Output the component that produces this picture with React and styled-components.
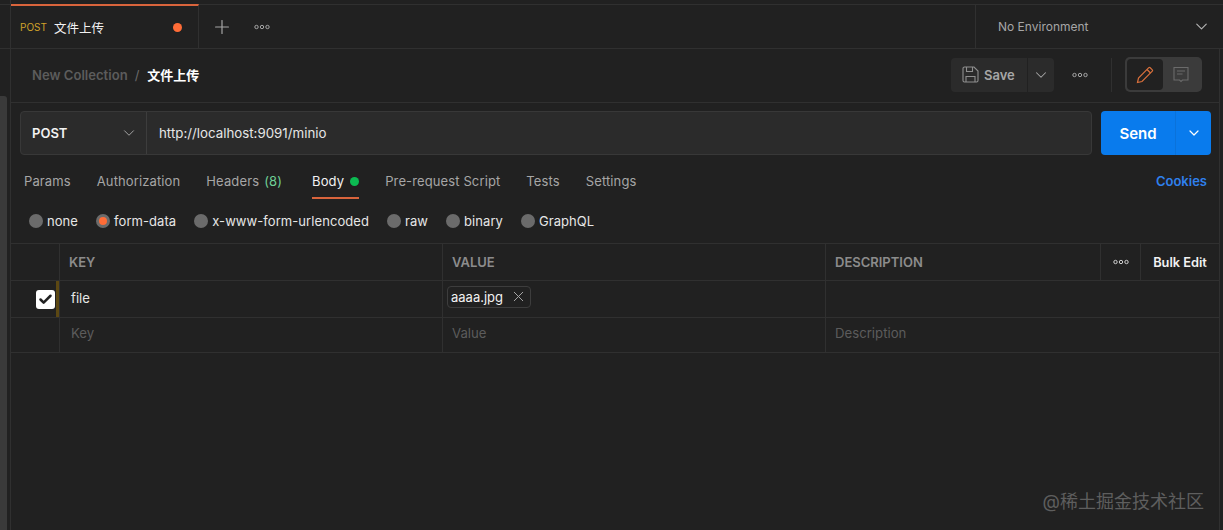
import React from "react";
import styled, { createGlobalStyle } from "styled-components";
import { ChevronDown, Plus, X, Check } from "lucide-react";

const Global = createGlobalStyle`
  html, body { margin: 0; padding: 0; background: #212121; }
  * { box-sizing: border-box; }
  body { font-family: Inter, "Noto Sans CJK SC", sans-serif; }
`;

const line = "#303030";

const Dots = ({ color = "#a6a6a6" }) => (
  <svg width="16" height="6" viewBox="0 0 16 6" fill="none" stroke={color} strokeWidth="1">
    <circle cx="2.5" cy="3" r="1.7" />
    <circle cx="8" cy="3" r="1.7" />
    <circle cx="13.5" cy="3" r="1.7" />
  </svg>
);

const SaveIcon = () => (
  <svg width="17" height="17" viewBox="0 0 17 17" fill="none" stroke="#8f8f8f" strokeWidth="1.1">
    <path d="M1 2.5A1.5 1.5 0 0 1 2.5 1H12l4 4v9.5a1.5 1.5 0 0 1-1.5 1.5h-12A1.5 1.5 0 0 1 1 14.5z" />
    <path d="M4.5 1v4.5h6V1M4 16v-5.5h9V16" />
  </svg>
);

const PencilIcon = () => (
  <svg width="18" height="18" viewBox="0 0 18 18" fill="none" stroke="#d9703c" strokeWidth="1.2">
    <path d="M1.5 16.5l1-4.5L12.8 1.7a1 1 0 0 1 1.4 0l2.1 2.1a1 1 0 0 1 0 1.4L6 15.5z" />
    <path d="M11 3.5l3.5 3.5" />
  </svg>
);

const CommentIcon = () => (
  <svg width="16" height="17" viewBox="0 0 16 17" fill="none" stroke="#6b6b6b" strokeWidth="1.1">
    <path d="M1 1.5h14v12.5H9.5L8 15.5 6.5 14H1z" />
    <path d="M4 5h8M4 8h5.5" />
  </svg>
);

const tabs = [
  { label: "Params" },
  { label: "Authorization" },
  { label: "Headers", count: "(8)" },
  { label: "Body", active: true, dot: true },
  { label: "Pre-request Script" },
  { label: "Tests" },
  { label: "Settings" },
];

const bodyTypes = ["none", "form-data", "x-www-form-urlencoded", "raw", "binary", "GraphQL"];

export default function App() {
  return (
    <Shell>
      <Global />
      <Rail>
        <RailHead />
        <Scroll />
      </Rail>
      <Main>
        <TabBar>
          <RequestTab>
            <Method>POST</Method>
            <TabTitle>文件上传</TabTitle>
            <Unsaved />
          </RequestTab>
          <TabAdd>
            <Plus size={22} strokeWidth={1.3} />
          </TabAdd>
          <Dots />
          <EnvPicker>
            <span>No Environment</span>
            <ChevronDown size={19} strokeWidth={1.4} color="#b5b5b5" />
          </EnvPicker>
        </TabBar>

        <Pane>
          <CrumbBar>
            <Crumb>New Collection</Crumb>
            <CrumbSlash>/</CrumbSlash>
            <CrumbCurrent>文件上传</CrumbCurrent>
            <SaveGroup>
              <SaveMain>
                <SaveIcon />
                Save
              </SaveMain>
              <SaveCaret>
                <ChevronDown size={18} strokeWidth={1.4} color="#a6a6a6" />
              </SaveCaret>
            </SaveGroup>
            <MoreSlot>
              <Dots />
            </MoreSlot>
            <ModeSwitch>
              <ModeButton $active>
                <PencilIcon />
              </ModeButton>
              <ModeButton>
                <CommentIcon />
              </ModeButton>
            </ModeSwitch>
          </CrumbBar>

          <UrlRow>
            <UrlBox>
              <MethodSelect>
                POST
                <ChevronDown size={18} strokeWidth={1.3} color="#a6a6a6" />
              </MethodSelect>
              <UrlText>http://localhost:9091/minio</UrlText>
            </UrlBox>
            <SendGroup>
              <SendMain>Send</SendMain>
              <SendCaret>
                <ChevronDown size={16} strokeWidth={1.8} color="#ffffff" />
              </SendCaret>
            </SendGroup>
          </UrlRow>

          <TabsRow>
            {tabs.map((t) => (
              <ReqTab key={t.label} $active={t.active}>
                {t.label}
                {t.count && <Count>{t.count}</Count>}
                {t.dot && <GreenDot />}
              </ReqTab>
            ))}
            <Cookies>Cookies</Cookies>
          </TabsRow>

          <RadioRow>
            {bodyTypes.map((b) => (
              <RadioItem key={b}>
                <Radio $on={b === "form-data"} />
                {b}
              </RadioItem>
            ))}
          </RadioRow>

          <Table>
            <HeadRow>
              <CheckCell />
              <HeadCell $w={383}>KEY</HeadCell>
              <HeadCell $w={383}>VALUE</HeadCell>
              <HeadCell $grow>DESCRIPTION</HeadCell>
              <IconCell>
                <Dots color="#d0d0d0" />
              </IconCell>
              <BulkCell>Bulk Edit</BulkCell>
            </HeadRow>
            <BodyRow $h={37}>
              <CheckCell>
                <Tick>
                  <Check size={15} strokeWidth={4} color="#212121" />
                </Tick>
                <Marker />
              </CheckCell>
              <KeyCell $w={383} $pad={11}>file</KeyCell>
              <ValueCell $w={383}>
                <FileChip>
                  aaaa.jpg
                  <X size={17} strokeWidth={1.4} color="#a6a6a6" />
                </FileChip>
              </ValueCell>
            </BodyRow>
            <BodyRow $h={35}>
              <CheckCell />
              <KeyCell $w={383} $pad={11} $ghost>Key</KeyCell>
              <KeyCell $w={383} $pad={9} $ghost>Value</KeyCell>
              <KeyCell $pad={9} $ghost $grow>Description</KeyCell>
            </BodyRow>
          </Table>
        </Pane>
        <Watermark>@稀土掘金技术社区</Watermark>
      </Main>
    </Shell>
  );
}

const Shell = styled.div`
  display: flex;
  width: 1223px;
  height: 530px;
  overflow: hidden;
  background: #212121;
`;
const Rail = styled.div`
  width: 11px;
  border-right: 1px solid ${line};
  flex: none;
`;
const RailHead = styled.div`
  height: 45px;
  margin: 4px 0 47px;
  border-top: 1px solid ${line};
  border-bottom: 1px solid ${line};
`;
const Scroll = styled.div`
  width: 7px;
  height: 434px;
  background: #3a3a3a;
  border-radius: 0 3px 0 0;
`;
const Main = styled.div`
  position: relative;
  width: 1212px;
  height: 526px;
  margin-top: 4px;
  border-top: 1px solid ${line};
  flex: none;
`;
const TabBar = styled.div`
  display: flex;
  align-items: center;
  height: 44px;
  border-bottom: 1px solid ${line};
`;
const RequestTab = styled.div`
  display: flex;
  align-items: center;
  width: 188px;
  height: 44px;
  margin-top: -1px;
  padding: 0 16px 0 9px;
  border-top: 2px solid #d9643c;
  border-right: 1px solid ${line};
  background: #212121;
`;
const Method = styled.span`
  font-size: 10px;
  color: #d0a12a;
  margin-right: 7px;
`;
const TabTitle = styled.span`
  font-size: 12.5px;
  color: #f2f2f2;
`;
const Unsaved = styled.span`
  width: 9px;
  height: 9px;
  margin-left: auto;
  border-radius: 50%;
  background: #ff6c37;
`;
const TabAdd = styled.div`
  display: flex;
  margin: 0 21px 0 12px;
  color: #a6a6a6;
`;
const EnvPicker = styled.div`
  display: flex;
  align-items: center;
  justify-content: space-between;
  width: 248px;
  height: 43px;
  margin-left: auto;
  padding: 0 12px 0 22px;
  border-left: 1px solid ${line};
  font-size: 12px;
  color: #a6a6a6;
`;
const Pane = styled.div`
  width: 1209px;
  height: 481px;
  border-right: 1px solid ${line};
`;
const CrumbBar = styled.div`
  display: flex;
  align-items: center;
  height: 54px;
  padding: 0 17px 2px 21px;
  border-bottom: 1px solid ${line};
`;
const Crumb = styled.span`
  font-size: 13.1px;
  font-weight: 600;
  color: #5c5c5c;
`;
const CrumbSlash = styled.span`
  margin: 0 8px 0 7px;
  font-size: 13px;
  color: #6b6b6b;
`;
const CrumbCurrent = styled.span`
  font-size: 13px;
  font-weight: 700;
  color: #ffffff;
`;
const SaveGroup = styled.div`
  display: flex;
  height: 34px;
  margin-left: auto;
  border-radius: 4px;
  background: #2b2b2b;
`;
const SaveMain = styled.div`
  display: flex;
  align-items: center;
  gap: 5px;
  width: 76px;
  padding-left: 11px;
  font-size: 13px;
  font-weight: 600;
  color: #a6a6a6;
`;
const SaveCaret = styled.div`
  display: flex;
  align-items: center;
  justify-content: center;
  width: 27px;
  border-left: 1px solid #212121;
`;
const MoreSlot = styled.div`
  display: flex;
  align-items: center;
  justify-content: center;
  width: 58px;
  height: 34px;
  padding-right: 6px;
  border-right: 1px solid ${line};
  margin-right: 13px;
`;
const ModeSwitch = styled.div`
  display: flex;
  width: 77px;
  height: 35px;
  padding: 2px;
  border-radius: 5px;
  background: #3b3b3b;
`;
const ModeButton = styled.div`
  display: flex;
  align-items: center;
  justify-content: center;
  width: 36px;
  border-radius: 4px;
  background: ${(p) => (p.$active ? "#212121" : "transparent")};
`;
const UrlRow = styled.div`
  display: flex;
  gap: 9px;
  padding: 8px 8px 0 9px;
`;
const UrlBox = styled.div`
  display: flex;
  flex: 1;
  height: 44px;
  border: 1px solid #383838;
  border-radius: 4px;
  background: #2b2b2b;
`;
const MethodSelect = styled.div`
  display: flex;
  align-items: center;
  justify-content: space-between;
  width: 126px;
  padding: 0 8px 0 11px;
  border-right: 1px solid #3d3d3d;
  font-size: 13px;
  font-weight: 600;
  color: #f2f2f2;
`;
const UrlText = styled.div`
  display: flex;
  align-items: center;
  padding-left: 12px;
  font-size: 13.3px;
  color: #e6e6e6;
`;
const SendGroup = styled.div`
  display: flex;
  width: 110px;
  height: 44px;
  border-radius: 4px;
  background: #097bed;
`;
const SendMain = styled.div`
  display: flex;
  align-items: center;
  justify-content: center;
  width: 74px;
  font-size: 15px;
  font-weight: 600;
  color: #ffffff;
`;
const SendCaret = styled.div`
  display: flex;
  align-items: center;
  justify-content: center;
  flex: 1;
  border-left: 1px solid #0a72da;
`;
const TabsRow = styled.div`
  display: flex;
  gap: 26px;
  height: 44px;
  padding: 0 12px 0 13px;
`;
const ReqTab = styled.div`
  display: flex;
  align-items: center;
  height: 44px;
  padding-top: 10px;
  font-size: 13px;
  letter-spacing: 0.12px;
  color: ${(p) => (p.$active ? "#f2f2f2" : "#a6a6a6")};
  border-bottom: 2px solid ${(p) => (p.$active ? "#d9643c" : "transparent")};
`;
const Count = styled.span`
  margin: 0 4px 0 5px;
  color: #6fcf97;
`;
const GreenDot = styled.span`
  width: 9px;
  height: 9px;
  margin-left: 6px;
  border-radius: 50%;
  background: #0cbb52;
`;
const Cookies = styled.div`
  display: flex;
  align-items: center;
  margin-left: auto;
  padding-top: 8px;
  font-size: 13px;
  font-weight: 600;
  color: #2f80ed;
`;
const RadioRow = styled.div`
  display: flex;
  align-items: center;
  gap: 18px;
  height: 44px;
  padding-left: 18px;
`;
const RadioItem = styled.div`
  display: flex;
  align-items: center;
  gap: 4px;
  font-size: 13px;
  letter-spacing: 0.07px;
  color: #e6e6e6;
`;
const Radio = styled.span`
  width: 14px;
  height: 14px;
  border-radius: 50%;
  background: ${(p) => (p.$on ? "#ff6c37" : "#6b6b6b")};
  border: ${(p) => (p.$on ? "3px solid #6b6b6b" : "none")};
`;
const Table = styled.div`
  border-top: 1px solid ${line};
`;
const HeadRow = styled.div`
  display: flex;
  height: 37px;
  border-bottom: 1px solid ${line};
`;
const BodyRow = styled.div`
  display: flex;
  height: ${(p) => p.$h}px;
  border-bottom: 1px solid ${line};
`;
const CheckCell = styled.div`
  position: relative;
  display: flex;
  align-items: center;
  width: 49px;
  padding-left: 25px;
  flex: none;
  border-right: 1px solid ${line};
`;
const Tick = styled.span`
  display: flex;
  align-items: center;
  justify-content: center;
  width: 19px;
  height: 19px;
  border-radius: 3px;
  background: #ffffff;
`;
const Marker = styled.span`
  position: absolute;
  top: 0;
  right: 0;
  width: 3px;
  height: 100%;
  background: #5c4813;
`;
const HeadCell = styled.div`
  display: flex;
  align-items: center;
  width: ${(p) => (p.$grow ? "auto" : `${p.$w}px`)};
  flex: ${(p) => (p.$grow ? 1 : "none")};
  padding-left: 9px;
  border-right: ${(p) => (p.$grow ? "none" : `1px solid ${line}`)};
  font-size: 13px;
  font-weight: 600;
  color: #8c8c8c;
`;
const IconCell = styled.div`
  display: flex;
  align-items: center;
  justify-content: center;
  width: 41px;
  border-left: 1px solid ${line};
  border-right: 1px solid ${line};
`;
const BulkCell = styled.div`
  display: flex;
  align-items: center;
  justify-content: center;
  width: 78px;
  font-size: 12.8px;
  font-weight: 600;
  color: #f2f2f2;
`;
const KeyCell = styled.div`
  display: flex;
  align-items: center;
  width: ${(p) => (p.$grow ? "auto" : `${p.$w}px`)};
  flex: ${(p) => (p.$grow ? 1 : "none")};
  padding: ${(p) => (p.$ghost ? "0 0 5px" : "0 0 3px")} ${(p) => p.$pad}px;
  border-right: ${(p) => (p.$grow ? "none" : `1px solid ${line}`)};
  font-size: 13.2px;
  color: ${(p) => (p.$ghost ? "#5c5c5c" : "#e6e6e6")};
`;
const ValueCell = styled.div`
  display: flex;
  align-items: center;
  width: ${(p) => p.$w}px;
  flex: none;
  padding-left: 4px;
  border-right: 1px solid ${line};
`;
const FileChip = styled.div`
  display: flex;
  align-items: center;
  gap: 7px;
  height: 22px;
  margin-top: -5px;
  padding: 0 3px 0 3px;
  border: 1px solid #3d3d3d;
  border-radius: 4px;
  font-size: 13px;
  color: #f2f2f2;
`;
const Watermark = styled.div`
  position: absolute;
  right: 19px;
  top: 482px;
  font-size: 18px;
  color: #5e5e5e;
`;
